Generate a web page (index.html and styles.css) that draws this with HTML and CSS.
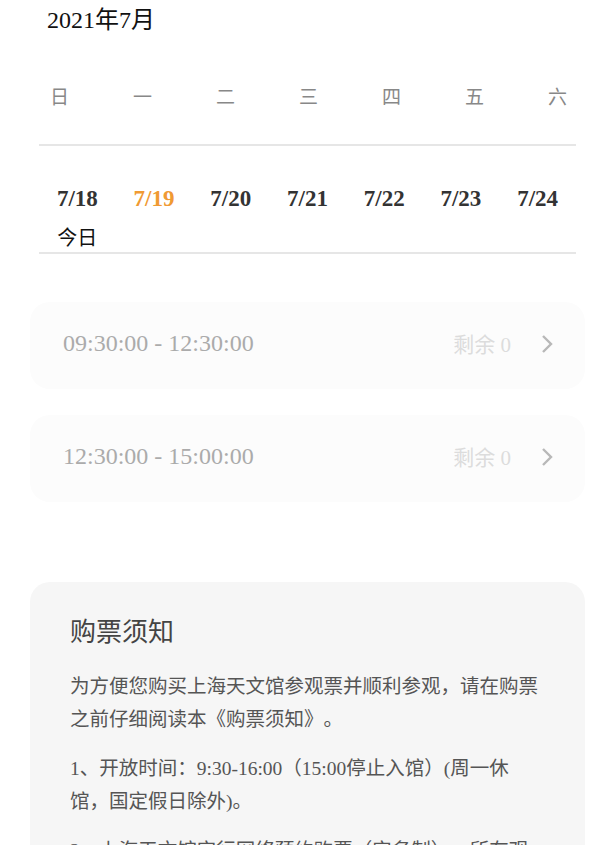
FILE: index.html
```html
<!DOCTYPE html>
<html lang="zh-CN">
<head>
<meta charset="utf-8">
<link rel="stylesheet" href="styles.css">
</head>
<body>
<div class="month">2021年7月</div>
<div class="weekdays">
  <span>日</span><span>一</span><span>二</span><span>三</span><span>四</span><span>五</span><span>六</span>
</div>
<div class="dates">
  <div class="day"><div class="num">7/18</div><div class="sub">今日</div></div>
  <div class="day"><div class="num active">7/19</div></div>
  <div class="day"><div class="num">7/20</div></div>
  <div class="day"><div class="num">7/21</div></div>
  <div class="day"><div class="num">7/22</div></div>
  <div class="day"><div class="num">7/23</div></div>
  <div class="day"><div class="num">7/24</div></div>
</div>
<div class="slots">
  <div class="slot">
    <span class="time">09:30:00 - 12:30:00</span>
    <span class="left">剩余 0</span>
    <svg class="chev" width="14" height="20" viewBox="0 0 14 20"><path d="M3 2 L11 10 L3 18" fill="none" stroke="#b8b8b8" stroke-width="2.4"/></svg>
  </div>
  <div class="slot">
    <span class="time">12:30:00 - 15:00:00</span>
    <span class="left">剩余 0</span>
    <svg class="chev" width="14" height="20" viewBox="0 0 14 20"><path d="M3 2 L11 10 L3 18" fill="none" stroke="#b8b8b8" stroke-width="2.4"/></svg>
  </div>
</div>
<div class="notice">
  <h2 class="title">购票须知</h2>
  <p>为方便您购买上海天文馆参观票并顺利参观，请在购票之前仔细阅读本《购票须知》。</p>
  <p>1、开放时间：9:30-16:00（15:00停止入馆）(周一休馆，国定假日除外)。</p>
  <p>2、上海天文馆实行网络预约购票（实名制），所有观众均需提前通过官方渠道预约购票。</p>
  <p>3、每个身份证件每个场次限购一张门票。</p>
</div>
</body>
</html>
```
FILE: styles.css
```css
body {
  margin: 0;
  background: #fff;
  font-family: "Liberation Serif", "Noto Sans CJK SC", serif;
  color: #222;
}
.month {
  padding-left: 47px;
  font-size: 24px;
  line-height: 40px;
  color: #111;
}
.weekdays {
  margin-top: 38px;
  display: flex;
  justify-content: space-between;
  padding: 0 34px 0 50px;
  font-size: 19px;
  line-height: 40px;
  color: #888;
}
.dates {
  margin: 26px 25px 0 39px;
  border-top: 2px solid #e6e6e6;
  border-bottom: 2px solid #e6e6e6;
  height: 106px;
  display: grid;
  grid-template-columns: repeat(7, 1fr);
}
.day {
  text-align: center;
  padding-top: 38px;
}
.num {
  font-size: 23px;
  font-weight: bold;
  line-height: 30px;
  color: #333;
}
.num.active {
  color: #f09a33;
}
.sub {
  margin-top: 12px;
  font-size: 20px;
  line-height: 24px;
  color: #111;
}
.slots {
  margin: 48px 16px 0 30px;
  display: flex;
  flex-direction: column;
  gap: 26px;
}
.slot {
  height: 87px;
  box-sizing: border-box;
  border-radius: 20px;
  background: #fcfcfc;
  display: flex;
  align-items: center;
  padding: 0 31px 4px 33px;
}
.time {
  font-size: 24px;
  color: #ababab;
  flex: 1;
}
.left {
  font-size: 21px;
  color: #dcdcdc;
  margin-right: 29px;
  margin-bottom: 2px;
}
.chev {
  display: block;
}
.notice {
  margin: 80px 16px 0 30px;
  background: #f6f6f6;
  border-radius: 20px;
  padding: 33px 40px 30px 40px;
}
.title {
  margin: 0 0 19px;
  font-size: 26px;
  font-weight: normal;
  line-height: 36px;
  color: #444;
}
.notice p {
  margin: 0 0 16px;
  font-size: 19.5px;
  line-height: 33px;
  color: #555;
  text-spacing-trim: space-all;
}
```
